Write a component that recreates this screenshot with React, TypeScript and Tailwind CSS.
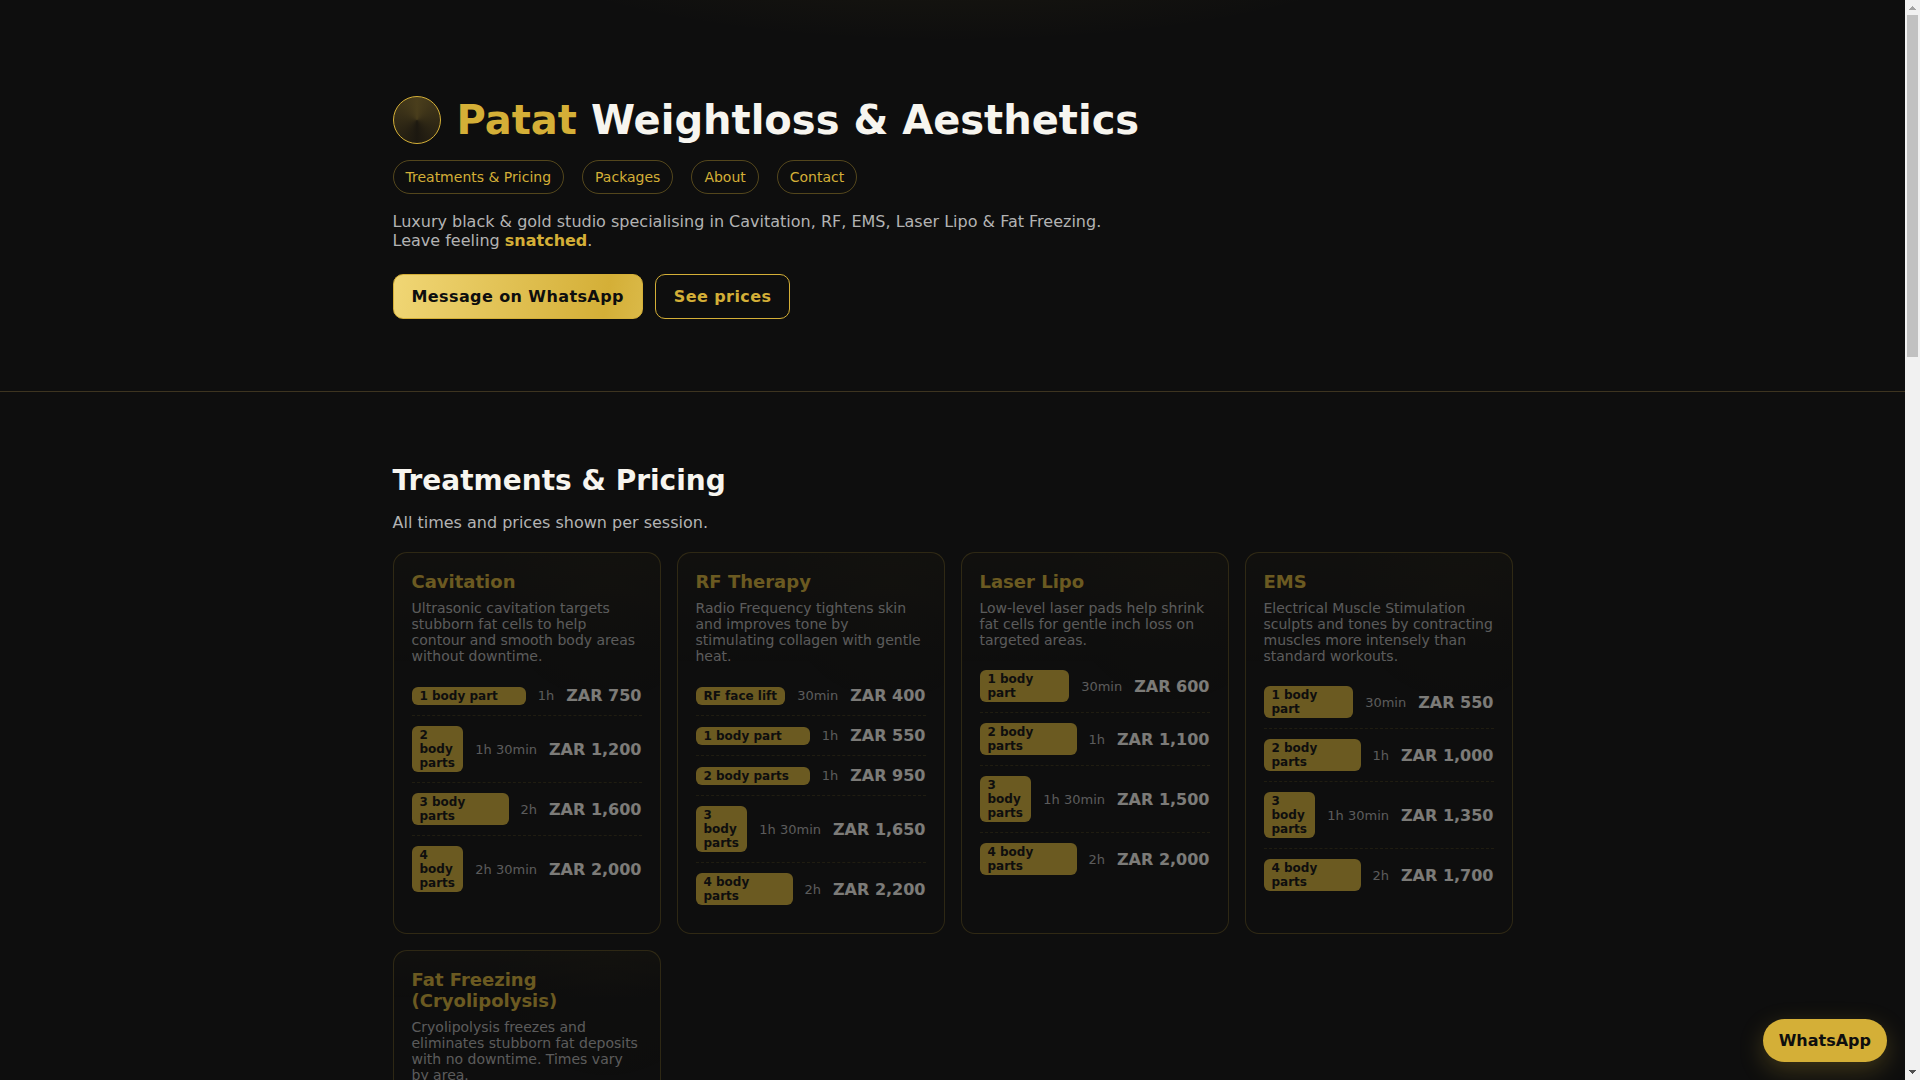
type Price = { label: string; time: string; price: string };
type Treatment = { name: string; blurb: string; prices: Price[] };

const nav = [
  { label: "Treatments & Pricing", href: "#treatments" },
  { label: "Packages", href: "#packages" },
  { label: "About", href: "#about" },
  { label: "Contact", href: "#contact" },
];

const treatments: Treatment[] = [
  {
    name: "Cavitation",
    blurb:
      "Ultrasonic cavitation targets stubborn fat cells to help contour and smooth body areas without downtime.",
    prices: [
      { label: "1 body part", time: "1h", price: "ZAR 750" },
      { label: "2 body parts", time: "1h 30min", price: "ZAR 1,200" },
      { label: "3 body parts", time: "2h", price: "ZAR 1,600" },
      { label: "4 body parts", time: "2h 30min", price: "ZAR 2,000" },
    ],
  },
  {
    name: "RF Therapy",
    blurb:
      "Radio Frequency tightens skin and improves tone by stimulating collagen with gentle heat.",
    prices: [
      { label: "RF face lift", time: "30min", price: "ZAR 400" },
      { label: "1 body part", time: "1h", price: "ZAR 550" },
      { label: "2 body parts", time: "1h", price: "ZAR 950" },
      { label: "3 body parts", time: "1h 30min", price: "ZAR 1,650" },
      { label: "4 body parts", time: "2h", price: "ZAR 2,200" },
    ],
  },
  {
    name: "Laser Lipo",
    blurb:
      "Low-level laser pads help shrink fat cells for gentle inch loss on targeted areas.",
    prices: [
      { label: "1 body part", time: "30min", price: "ZAR 600" },
      { label: "2 body parts", time: "1h", price: "ZAR 1,100" },
      { label: "3 body parts", time: "1h 30min", price: "ZAR 1,500" },
      { label: "4 body parts", time: "2h", price: "ZAR 2,000" },
    ],
  },
  {
    name: "EMS",
    blurb:
      "Electrical Muscle Stimulation sculpts and tones by contracting muscles more intensely than standard workouts.",
    prices: [
      { label: "1 body part", time: "30min", price: "ZAR 550" },
      { label: "2 body parts", time: "1h", price: "ZAR 1,000" },
      { label: "3 body parts", time: "1h 30min", price: "ZAR 1,350" },
      { label: "4 body parts", time: "2h", price: "ZAR 1,700" },
    ],
  },
  {
    name: "Fat Freezing (Cryolipolysis)",
    blurb:
      "Cryolipolysis freezes and eliminates stubborn fat deposits with no downtime. Times vary by area.",
    prices: [],
  },
];

export default function App() {
  return (
    <div className="flex h-screen bg-[#0e0e0e] font-['DejaVu_Sans',sans-serif] text-base leading-[19px] text-[#f7f5ef]">
      <div className="relative min-w-0 flex-1 overflow-hidden">
        <header className="border-b border-[#3d3420] bg-[radial-gradient(800px_200px_at_50%_-20%,rgba(212,175,55,0.08),transparent_60%)] pt-24 pb-[72px]">
          <div className="mx-auto max-w-[1120px]">
            <div className="flex items-center gap-4">
              <Logo />
              <h1 className="text-[40px] leading-[48px] font-bold">
                <span className="text-[#d4af37]">Patat</span> Weightloss &amp; Aesthetics
              </h1>
            </div>
            <nav className="mt-4 flex flex-wrap gap-[18px]">
              {nav.map((item) => (
                <a
                  key={item.href}
                  href={item.href}
                  className="rounded-full border border-[#d4af37]/35 px-3 py-2 text-sm leading-4 text-[#d4af37]"
                >
                  {item.label}
                </a>
              ))}
            </nav>
            <p className="mt-[18px] max-w-[720px] text-[#b3b3b3]">
              Luxury black &amp; gold studio specialising in Cavitation, RF, EMS, Laser Lipo &amp; Fat
              Freezing. Leave feeling <strong className="font-bold text-[#d4af37]">snatched</strong>.
            </p>
            <div className="mt-6 flex flex-wrap gap-3">
              <a
                href="#whatsapp"
                className="rounded-[10px] border border-[#d4af37] bg-[linear-gradient(100deg,#f0d675,#d4af37_85%,#dab948)] px-[18px] py-3 font-bold tracking-wide text-[#0e0e0e]"
              >
                Message on WhatsApp
              </a>
              <a
                href="#treatments"
                className="rounded-[10px] border border-[#d4af37] px-[18px] py-3 font-bold tracking-wide text-[#d4af37]"
              >
                See prices
              </a>
            </div>
          </div>
        </header>

        <main className="py-[72px]">
          <section id="treatments" className="mx-auto max-w-[1120px]">
            <h2 className="text-[28px] leading-[33px] font-bold">Treatments &amp; Pricing</h2>
            <p className="mt-4 text-[#b3b3b3]">All times and prices shown per session.</p>
            <div className="mt-5 grid grid-cols-1 gap-4 sm:grid-cols-2 lg:grid-cols-4">
              {treatments.map((t) => (
                <TreatmentCard key={t.name} treatment={t} />
              ))}
            </div>
          </section>
        </main>

        <a
          href="#whatsapp"
          className="absolute right-[18px] bottom-[18px] rounded-full bg-[#d4af37] px-4 py-3 font-bold text-[#0e0e0e] shadow-[0_8px_24px_rgba(212,175,55,0.25)]"
        >
          WhatsApp
        </a>
      </div>
      <Scrollbar />
    </div>
  );
}

function Logo() {
  return (
    <div className="size-12 shrink-0 rounded-full border border-[#d4af37] bg-[conic-gradient(from_180deg,#1c1810,#4a3e1c,#1c1810)]" />
  );
}

function TreatmentCard({ treatment }: { treatment: Treatment }) {
  return (
    <article className="rounded-[14px] border border-[#d4af37]/35 bg-[radial-gradient(120px_120px_at_80%_10%,rgba(212,175,55,0.02),transparent),linear-gradient(180deg,rgba(212,175,55,0.04),transparent_30%)] p-[18px] opacity-[0.47]">
      <h3 className="text-lg leading-[21px] font-bold text-[#d4af37]">{treatment.name}</h3>
      <p className="mt-2 text-sm leading-4 text-[#b3b3b3]">{treatment.blurb}</p>
      <ul className="mt-3">
        {treatment.prices.map((p) => (
          <li
            key={p.label}
            className="grid grid-cols-[1fr_auto_auto] items-center gap-3 border-b border-dashed border-[#d4af37]/20 py-[10px] last:border-b-0"
          >
            <span className="rounded-md bg-[#d4af37] px-2 py-[2px] text-xs leading-[14px] font-bold text-[#0e0e0e]">
              {p.label}
            </span>
            <span className="text-[13px] leading-[15px] text-[#b3b3b3]">{p.time}</span>
            <span className="font-bold">{p.price}</span>
          </li>
        ))}
      </ul>
    </article>
  );
}

function Scrollbar() {
  return (
    <div aria-hidden="true" className="flex w-[15px] shrink-0 flex-col items-center justify-between bg-[#f1f1f1]">
      <div className="flex flex-col items-center">
        <svg width="15" height="15" viewBox="0 0 15 15" shapeRendering="crispEdges">
          <path d="M4 10h7L7.5 6z" fill="#a3a3a3" />
        </svg>
        <div className="h-[342px] w-[11px] bg-[#c1c1c1]" />
      </div>
      <svg width="15" height="15" viewBox="0 0 15 15" shapeRendering="crispEdges">
        <path d="M4 5h7L7.5 9z" fill="#505050" />
      </svg>
    </div>
  );
}
